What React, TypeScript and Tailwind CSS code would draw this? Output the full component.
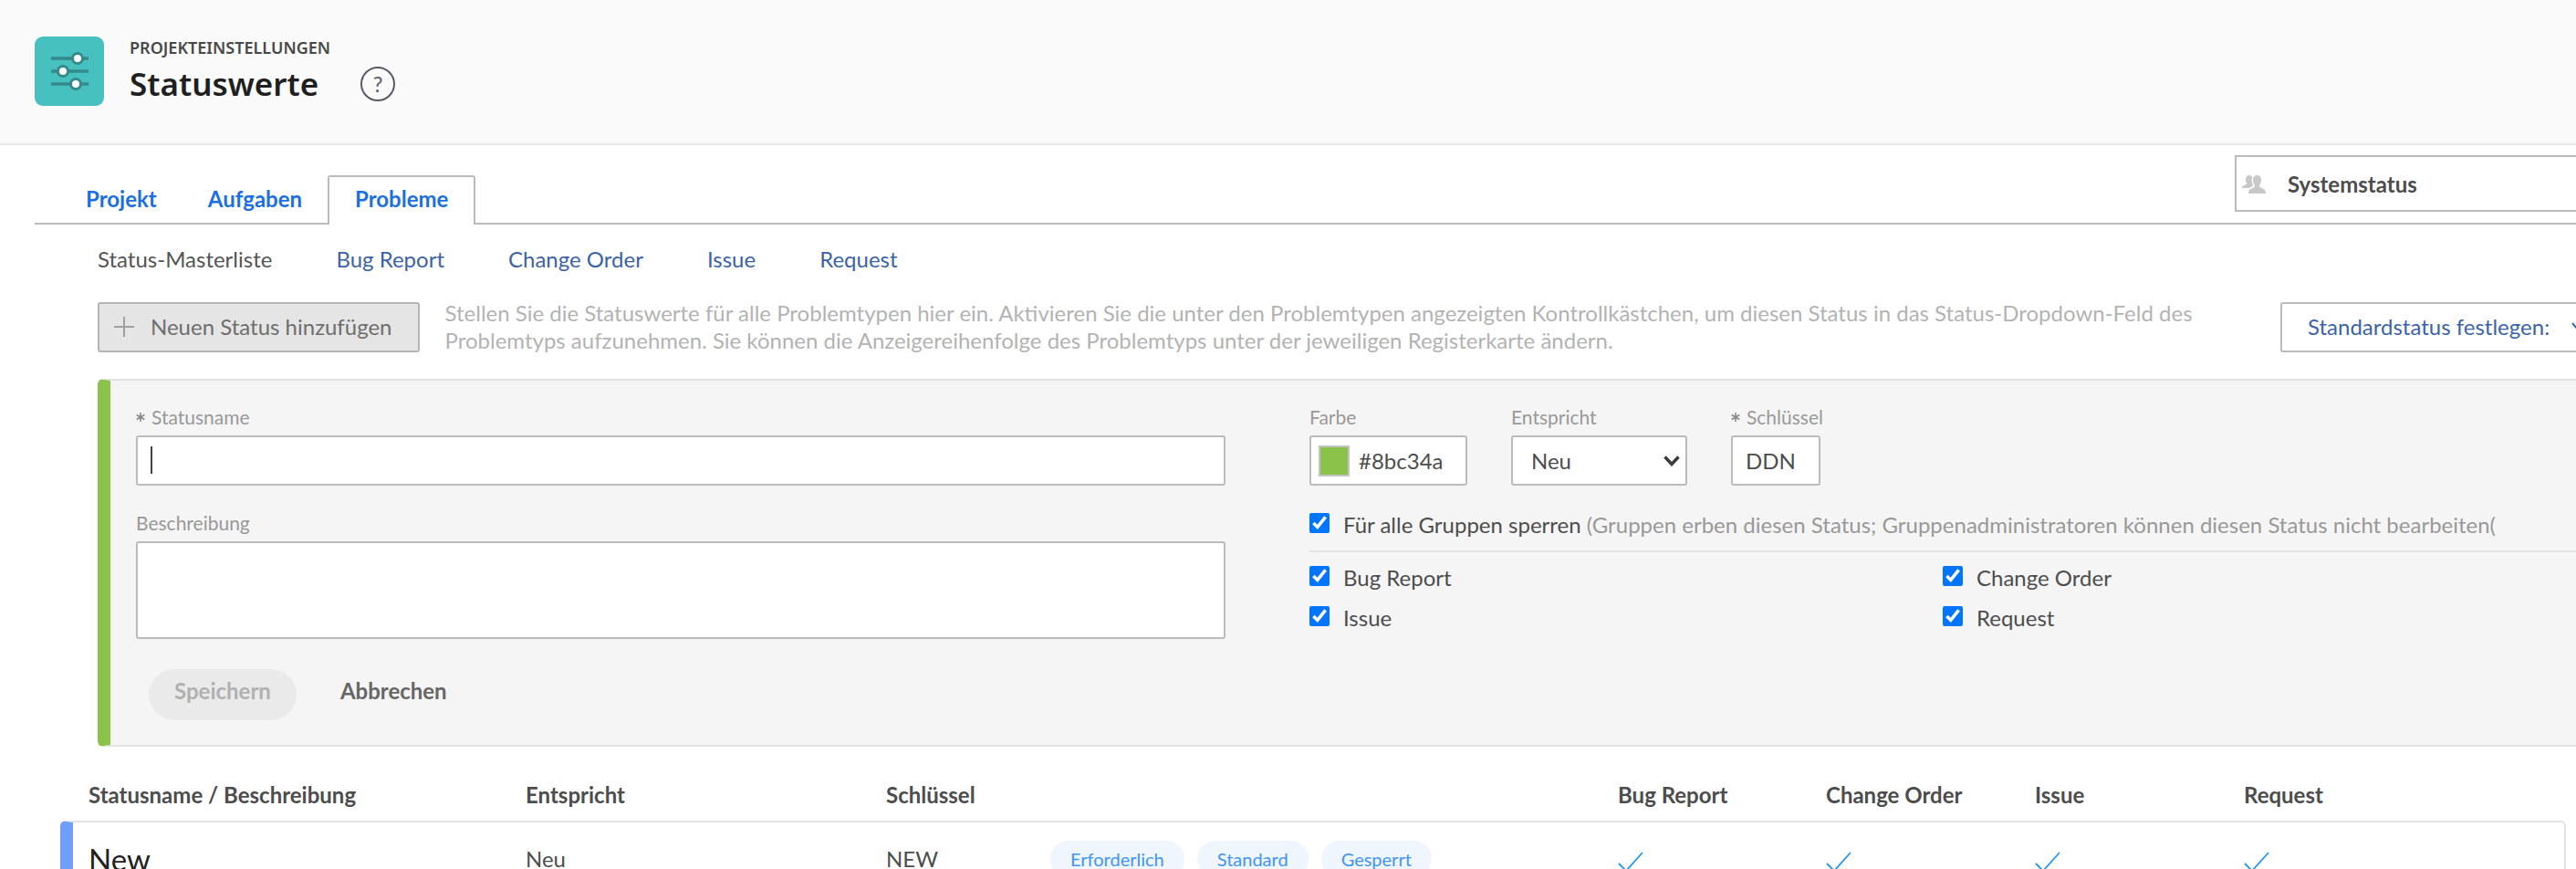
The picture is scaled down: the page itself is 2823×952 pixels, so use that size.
const issueTypes = ["Bug Report", "Change Order", "Issue", "Request"];

function SettingsIcon() {
  return (
    <svg viewBox="0 0 76 76" className="size-19 shrink-0" aria-hidden="true">
      <rect width="76" height="76" rx="9" fill="#47c1c0" />
      <g stroke="#348a8a" strokeWidth="3.5">
        <path d="M18 24h41M18 38h41M18 52h41" />
        <circle cx="47" cy="24" r="5.5" fill="#fff" strokeWidth="3" />
        <circle cx="31" cy="38" r="5.5" fill="#fff" strokeWidth="3" />
        <circle cx="45" cy="52" r="5.5" fill="#fff" strokeWidth="3" />
      </g>
    </svg>
  );
}

function PeopleIcon() {
  return (
    <svg viewBox="0 0 26 20" className="h-5 w-[26px] shrink-0" fill="#c8c8c8" aria-hidden="true">
      <path d="M8 0c2 0 3 1 3.400 2.500C10.500 4 10.400 7 11.500 9.500c.4 1 .3 1.500 0 2.500-1.500.8-3 1.300-3.800 2H0c0-1.700 1-2.600 3-3.300 1.600-.6 2.300-1 2.300-1.700C4.300 8 4 6.400 4 4.500 4 1.800 5.500 0 8 0z" />
      <path d="M16.500 0c3 0 4.500 2.100 4.500 5 0 2.500-.6 4.300-1.800 5.600-.4 2 .3 2.700 2.800 3.700 2.600 1 4 2.200 4 5.700H7c0-3.500 1.400-4.700 4-5.700 2.500-1 3.200-1.700 2.800-3.700C12.600 9.300 12 7.500 12 5c0-2.900 1.500-5 4.500-5z" />
    </svg>
  );
}

function PlusIcon() {
  return (
    <svg viewBox="0 0 22 22" className="size-[22px] shrink-0" stroke="#a0a0a0" strokeWidth="2" aria-hidden="true">
      <path d="M11 0v22M0 11h22" />
    </svg>
  );
}

function CheckMark() {
  return (
    <svg viewBox="0 0 28 24" className="h-6 w-7" fill="none" stroke="#2196f3" strokeWidth="1.800" aria-hidden="true">
      <path d="M1 13l8 8L27 1" />
    </svg>
  );
}

function RequiredMark() {
  return (
    <svg viewBox="0 0 10 10" className="mr-[7px] size-[10px] shrink-0" stroke="#8a8a8a" strokeWidth="1.600" aria-hidden="true">
      <path d="M5 0v10M.7 2.500l8.600 5M9.300 2.500l-8.600 5" />
    </svg>
  );
}

function FieldLabel({ id, text, required }: { id: string; text: string; required?: boolean }) {
  return (
    <label htmlFor={id} className="mb-2 flex items-center text-[21px] leading-6 whitespace-nowrap text-[#999]">
      {required && <RequiredMark />}
      {text}
    </label>
  );
}

function CheckField({ text, hint }: { text: string; hint?: string }) {
  return (
    <label className="flex items-start gap-[15px] whitespace-nowrap">
      <input type="checkbox" defaultChecked className="mt-px size-[22px] shrink-0 accent-[#0075ff]" />
      <span>
        {text}
        {hint && <span className="text-[#999]"> {hint}</span>}
      </span>
    </label>
  );
}

const fieldBox = "h-[55px] rounded-[3px] border-2 border-[#bbb] bg-white";

export default function App() {
  return (
    <div className="h-screen overflow-hidden bg-white font-['Lato',sans-serif] text-2xl leading-7 text-[#4d4d4d]">
      <header className="flex h-[159px] items-start gap-7 border-b-2 border-[#e8e8e8] bg-[#fafafa] pt-10 pl-[38px]">
        <SettingsIcon />
        <div className="font-['Noto_Sans',sans-serif] font-semibold">
          <p className="text-lg leading-6 text-[#484848]">PROJEKTEINSTELLUNGEN</p>
          <div className="flex items-center gap-[46px]">
            <h1 className="text-[35px] leading-[56px] text-[#1f1f1f]">Statuswerte</h1>
            <button type="button" aria-label="Hilfe" className="flex size-[38px] items-center justify-center rounded-full border-2 border-[#5a5a66] font-['Lato',sans-serif] text-2xl leading-7 font-normal text-[#5a5a66]">
              ?
            </button>
          </div>
        </div>
      </header>

      <div className="ml-[38px] flex h-[87px] items-end justify-between border-b-2 border-[#bbb]">
        <nav className="-mb-0.5 flex pl-7 font-bold text-[#1b6fe0]">
          <a href="#projekt" className="px-7 pt-3 pb-3.5">Projekt</a>
          <a href="#aufgaben" className="px-7 pt-3 pb-3.5">Aufgaben</a>
          <a href="#probleme" className="rounded-t-[3px] border-2 border-b-0 border-[#bbb] bg-white px-7 pt-2.5 pb-3.5">Probleme</a>
        </nav>
        <button type="button" className="-mr-8 mb-3 flex h-[62px] w-[406px] shrink-0 items-center gap-6 border-2 border-[#bbb] bg-white pt-0.5 pl-1.5 font-bold">
          <PeopleIcon />
          Systemstatus
        </button>
      </div>

      <main>
        <nav className="flex gap-[70px] pt-6 pl-[107px] text-[#3c63a8]">
          <a href="#master" className="text-[#555]">Status-Masterliste</a>
          {issueTypes.map((type) => (
            <a key={type} href={"#" + type}>{type}</a>
          ))}
        </nav>

        <div className="mt-[30px] flex items-center pl-[107px]">
          <button type="button" className="flex h-[55px] shrink-0 items-center gap-[18px] rounded-[3px] border-2 border-[#b5b5b5] bg-[#e5e5e5] pr-7 pl-4 text-[#6e6e6e]">
            <PlusIcon />
            Neuen Status hinzufügen
          </button>
          <p className="ml-7 flex-1 leading-[30px] text-[#b3b3b3]">
            Stellen Sie die Statuswerte für alle Problemtypen hier ein. Aktivieren Sie die unter den Problemtypen angezeigten Kontrollkästchen, um diesen Status in das Status-Dropdown-Feld des Problemtyps aufzunehmen. Sie können die Anzeigereihenfolge des Problemtyps unter der jeweiligen Registerkarte ändern.
          </p>
          <button type="button" className="-mr-8 flex h-[55px] w-[356px] shrink-0 items-center gap-6 rounded-[3px] border-2 border-[#bbb] bg-white pl-7 whitespace-nowrap text-[#3c63a8]">
            Standardstatus festlegen:
            <svg viewBox="0 0 14 10" className="h-2.5 w-3.5 shrink-0" fill="none" stroke="currentColor" strokeWidth="2" aria-hidden="true">
              <path d="M1 1l6 7 6-7" />
            </svg>
          </button>
        </div>

        <form className="mt-[27px] ml-[107px] grid grid-cols-[1194fr_1388fr] gap-x-[92px] rounded-l-md border-y-2 border-l-14 border-y-[#e2e2e2] border-l-[#8bc34a] bg-[#f5f5f5] pt-7 pb-[27px] pl-7">
          <div>
            <FieldLabel id="name" text="Statusname" required />
            <div className="relative">
              <input id="name" type="text" className={fieldBox + " block w-full px-3.5"} />
              <span className="absolute top-3 left-4 h-[30px] w-0.5 bg-[#444]" />
            </div>
            <div className="mt-[29px]">
              <FieldLabel id="description" text="Beschreibung" />
              <textarea id="description" className="block h-[107px] w-full resize-none rounded-[3px] border-2 border-[#bbb] bg-white px-3.5 py-2" />
            </div>
            <div className="mt-[33px] ml-3.5 flex gap-5 font-bold">
              <button type="button" disabled className="h-14 rounded-full bg-[#eaeaea] px-7 pb-2 text-[#b0b0b0]">Speichern</button>
              <button type="button" className="h-14 px-7 pb-2 text-[#666]">Abbrechen</button>
            </div>
          </div>

          <div>
            <div className="flex gap-12">
              <div>
                <FieldLabel id="color" text="Farbe" />
                <div className={fieldBox + " flex w-[173px] items-center gap-2.5 pl-2"}>
                  <span className="size-[34px] border-2 border-[#c4c4c4] bg-[#8bc34a]" />
                  <input id="color" type="text" defaultValue="#8bc34a" className="w-28 outline-none" />
                </div>
              </div>
              <div>
                <FieldLabel id="equates" text="Entspricht" />
                <div className="relative">
                  <select id="equates" className={fieldBox + " block w-[193px] appearance-none pl-5"}>
                    <option>Neu</option>
                  </select>
                  <svg viewBox="0 0 18 12" className="pointer-events-none absolute top-[22px] right-2 h-3 w-[18px]" fill="none" stroke="#3c3c3c" strokeWidth="3.500" aria-hidden="true">
                    <path d="M1.500 1.500L9 9.500l7.500-8" />
                  </svg>
                </div>
              </div>
              <div className="w-[98px]">
                <FieldLabel id="key" text="Schlüssel" required />
                <input id="key" type="text" defaultValue="DDN" className={fieldBox + " block w-full pl-3.5"} />
              </div>
            </div>
            <div className="mt-[29px] border-b-2 border-[#e2e2e2] pb-3.5">
              <CheckField
                text="Für alle Gruppen sperren"
                hint="(Gruppen erben diesen Status; Gruppenadministratoren können diesen Status nicht bearbeiten("
              />
            </div>
            <div className="grid grid-cols-2 gap-y-4 pt-3.5">
              {issueTypes.map((type) => (
                <CheckField key={type} text={type} />
              ))}
            </div>
          </div>
        </form>

        <div className="pt-[39px] pr-[11px] pl-[66px]">
          <table className="w-full table-fixed border-separate border-spacing-0 text-left">
            <colgroup>
              <col className="w-[510px]" />
              <col className="w-[395px]" />
              <col className="w-[180px]" />
              <col className="w-[622px]" />
              <col className="w-[228px]" />
              <col className="w-[229px]" />
              <col className="w-[229px]" />
              <col className="w-[353px]" />
            </colgroup>
            <thead>
              <tr>
                <th className="pb-3.5 pl-[31px]">Statusname / Beschreibung</th>
                <th className="pb-3.5">Entspricht</th>
                <th className="pb-3.5" colSpan={2}>Schlüssel</th>
                {issueTypes.map((type) => (
                  <th key={type} className="pb-3.5">{type}</th>
                ))}
              </tr>
            </thead>
            <tbody>
              <tr className="align-top">
                <td className="h-20 rounded-l-md border-y-2 border-l-14 border-y-[#e2e2e2] border-l-[#6f9ffb] pt-[22px] pl-[17px] text-[33px] leading-9 text-[#222]">New</td>
                <td className="border-y-2 border-[#e2e2e2] pt-[26px]">Neu</td>
                <td className="border-y-2 border-[#e2e2e2] pt-[26px]">NEW</td>
                <td className="border-y-2 border-[#e2e2e2] pt-5">
                  <div className="flex gap-3.5 text-xl leading-10 text-[#4095f5]">
                    {["Erforderlich", "Standard", "Gesperrt"].map((tag) => (
                      <span key={tag} className="rounded-full bg-[#f0f6fd] px-[22px]">{tag}</span>
                    ))}
                  </div>
                </td>
                <td className="border-y-2 border-[#e2e2e2] pt-8"><CheckMark /></td>
                <td className="border-y-2 border-[#e2e2e2] pt-8"><CheckMark /></td>
                <td className="border-y-2 border-[#e2e2e2] pt-8"><CheckMark /></td>
                <td className="rounded-r-md border-y-2 border-r-2 border-[#e2e2e2] pt-8"><CheckMark /></td>
              </tr>
            </tbody>
          </table>
        </div>
      </main>
    </div>
  );
}
